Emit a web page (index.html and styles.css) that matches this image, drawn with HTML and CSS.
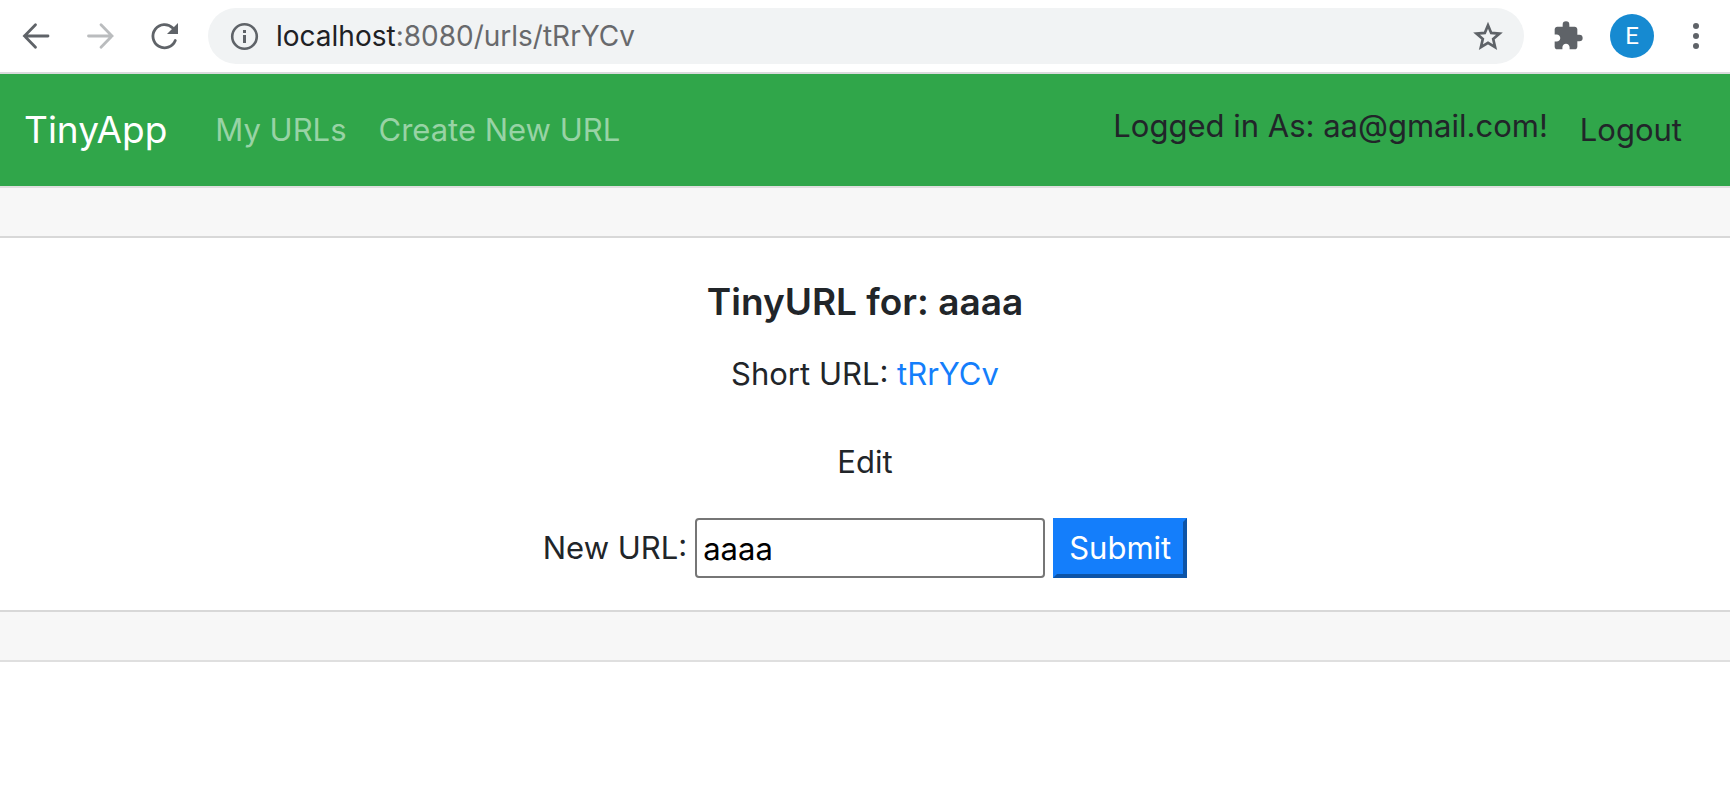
FILE: index.html
```html
<!DOCTYPE html>
<html lang="en">
<head>
<meta charset="utf-8">
<meta name="viewport" content="width=device-width, initial-scale=1">
<title>TinyApp</title>
<link rel="stylesheet" href="styles.css">
</head>
<body>
<div class="toolbar">
  <div class="toolbar-nav">
    <button class="icon-button" type="button" aria-label="Back">
      <svg class="icon" viewBox="0 0 32 32"><path d="M28 16H4.500M15.500 4.800L4.500 16l11 11.200" fill="none" stroke="#5f6368" stroke-width="2.800" stroke-linecap="round"/></svg>
    </button>
    <button class="icon-button" type="button" aria-label="Forward" disabled>
      <svg class="icon" viewBox="0 0 32 32"><path d="M4.500 16H28M17 4.800L28 16 17 27.200" fill="none" stroke="#babcbe" stroke-width="2.800" stroke-linecap="round"/></svg>
    </button>
    <button class="icon-button" type="button" aria-label="Reload">
      <svg class="icon" viewBox="0 0 32 32"><path d="M27.300 20.500A11.600 11.600 0 1 1 24.800 8" fill="none" stroke="#5f6368" stroke-width="2.800" stroke-linecap="round"/><path d="M30 3v11H19z" fill="#5f6368"/></svg>
    </button>
  </div>
  <div class="address-bar">
    <button class="icon-button" type="button" aria-label="Site information">
      <svg class="icon" viewBox="0 0 32 32"><circle cx="16.500" cy="16.500" r="12.300" fill="none" stroke="#5f6368" stroke-width="2.600"/><path d="M15 10h3v3h-3zM15 15h3v8h-3z" fill="#5f6368"/></svg>
    </button>
    <div class="address"><span class="address-host">localhost</span>:8080/urls/tRrYCv</div>
    <button class="icon-button" type="button" aria-label="Bookmark this page">
      <svg class="icon" viewBox="0 0 32 32"><path d="M16 5.200l3.200 7.700 8.300.7-6.300 5.400 1.900 8.100-7.100-4.300-7.100 4.300 1.900-8.100-6.300-5.400 8.300-.7z" fill="none" stroke="#5f6368" stroke-width="2.700"/></svg>
    </button>
  </div>
  <div class="toolbar-actions">
    <button class="icon-button" type="button" aria-label="Extensions">
      <svg class="icon" viewBox="0 0 24 24"><path d="M20.500 11H19V7c0-1.100-.9-2-2-2h-4V3.500a2.500 2.500 0 0 0-5 0V5H4c-1.100 0-1.990.9-1.990 2v3.800H3.500c1.490 0 2.700 1.210 2.700 2.700s-1.210 2.700-2.700 2.700H2V20c0 1.100.9 2 2 2h3.800v-1.500c0-1.490 1.210-2.700 2.700-2.700s2.700 1.210 2.700 2.700V22H17c1.100 0 2-.9 2-2v-4h1.500a2.500 2.500 0 0 0 0-5z" fill="#5f6368"/></svg>
    </button>
    <button class="avatar" type="button" aria-label="Profile">E</button>
    <button class="icon-button" type="button" aria-label="Menu">
      <svg class="icon" viewBox="0 0 32 32"><g fill="#5f6368"><circle cx="16" cy="6" r="3"/><circle cx="16" cy="16" r="3"/><circle cx="16" cy="26" r="3"/></g></svg>
    </button>
  </div>
</div>

<header class="navbar">
  <a class="brand" href="#">TinyApp</a>
  <nav class="nav-links">
    <a class="nav-link" href="#">My URLs</a>
    <a class="nav-link" href="#">Create New URL</a>
  </nav>
  <form class="session">
    <span class="session-user">Logged in As: aa@gmail.com!</span>
    <button class="logout" type="submit">Logout</button>
  </form>
</header>

<main class="card">
  <div class="card-band"></div>
  <div class="card-body">
    <h1 class="card-title">TinyURL for: aaaa</h1>
    <p class="short-url">Short URL: <a class="link" href="#">tRrYCv</a></p>
    <p class="edit-label">Edit</p>
    <form class="edit-form">
      <label for="new-url">New URL:</label>
      <input class="url-input" id="new-url" name="longURL" type="text" value="aaaa">
      <button class="submit" type="submit">Submit</button>
    </form>
  </div>
  <div class="card-band"></div>
</main>
</body>
</html>
```
FILE: styles.css
```css
* {
  box-sizing: border-box;
}

body {
  margin: 0;
  background: #fff;
  color: #212529;
  font-family: Inter, "Liberation Sans", sans-serif;
  font-size: 31px;
  line-height: 48px;
}

a {
  text-decoration: none;
}

button,
input {
  font: inherit;
}

.toolbar {
  display: flex;
  align-items: center;
  gap: 28px;
  padding: 8px 18px 8px 20px;
  border-bottom: 2px solid #dadbdc;
}

.toolbar-nav {
  display: flex;
  gap: 32px;
}

.toolbar-actions {
  display: flex;
  align-items: center;
  gap: 26px;
}

.icon-button {
  display: flex;
  padding: 0;
  border: 0;
  background: none;
}

.icon {
  width: 32px;
  height: 32px;
}

.address-bar {
  flex: 1;
  display: flex;
  align-items: center;
  gap: 16px;
  height: 56px;
  padding: 0 20px;
  border-radius: 28px;
  background: #f1f3f4;
}

.address {
  flex: 1;
  color: #68696c;
  font-size: 28px;
}

.address-host {
  color: #202124;
}

.avatar {
  width: 44px;
  height: 44px;
  padding: 0;
  border: 0;
  border-radius: 50%;
  background: #168ad1;
  color: #fff;
  font-family: Roboto, sans-serif;
  font-size: 24px;
  line-height: 44px;
}

.navbar {
  display: flex;
  align-items: center;
  padding: 16px 32px 16px 24px;
  background: #30a64a;
}

.brand {
  margin-right: 32px;
  color: #fff;
  font-size: 37px;
  line-height: 60px;
}

.nav-links {
  flex: 1;
  display: flex;
}

.nav-link {
  padding: 16px;
  color: #98d3a5;
}

.session {
  display: flex;
  align-items: flex-start;
  gap: 16px;
}

.session-user {
  padding-top: 12px;
}

.logout {
  padding: 16px;
  border: 0;
  background: none;
  color: #212529;
}

.card {
  border-top: 2px solid #dfdfdf;
  border-bottom: 2px solid #dfdfdf;
}

.card-band {
  height: 48px;
  background: #f7f7f7;
}

.card-body {
  padding: 40px 40px 32px;
  border-top: 2px solid #d8d8d8;
  border-bottom: 2px solid #d8d8d8;
  text-align: center;
}

.card-title {
  margin: 0 0 24px;
  font-size: 37px;
  font-weight: 600;
  line-height: 48px;
}

.short-url {
  margin: 0 0 40px;
}

.edit-label {
  margin: 0 0 32px;
}

.link {
  color: #147efb;
}

.edit-form {
  display: flex;
  align-items: center;
  justify-content: center;
  gap: 8px;
}

.url-input {
  width: 350px;
  height: 60px;
  padding: 2px 6px;
  border: 2px solid #767676;
  border-radius: 4px;
  background: #fff;
  color: #000;
}

.submit {
  height: 60px;
  padding: 0 12px;
  border: 4px outset #147efb;
  background: #147efb;
  color: #fff;
}
```
